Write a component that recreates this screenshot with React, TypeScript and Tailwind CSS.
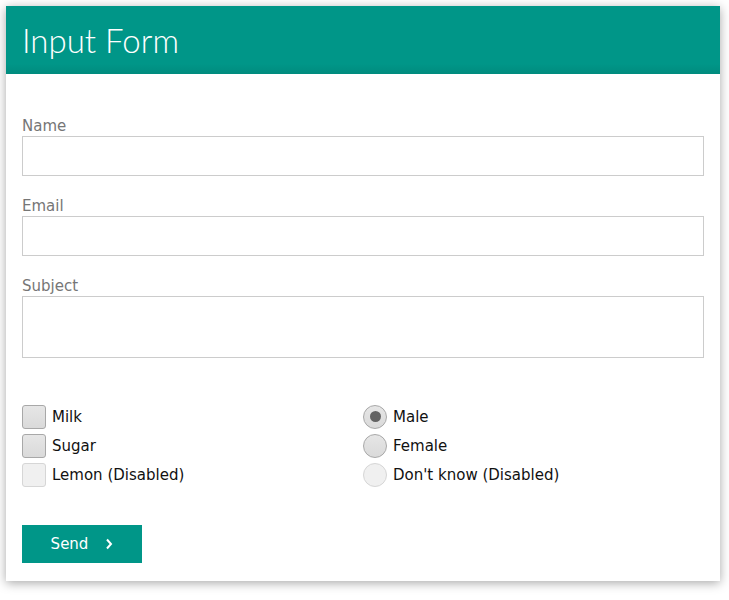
import React from "react";

function Checkbox({ label, disabled }: { label: string; disabled?: boolean }) {
  return (
    <div className="flex h-[29px] items-center">
      <span
        className={
          disabled
            ? "box-border h-[24px] w-[24px] rounded-[3px] border border-[#d6d6d6] bg-[#f0f0f0]"
            : "box-border h-[24px] w-[24px] rounded-[3px] border border-[#a8a8a8] bg-gradient-to-b from-[#e6e6e6] to-[#dadada]"
        }
      />
      <span className="ml-[6px] text-[15px] leading-[20px] text-[#111]">{label}</span>
    </div>
  );
}

function Radio({ label, disabled, checked }: { label: string; disabled?: boolean; checked?: boolean }) {
  return (
    <div className="flex h-[29px] items-center">
      <span
        className={
          disabled
            ? "box-border flex h-[24px] w-[24px] items-center justify-center rounded-full border border-[#d6d6d6] bg-[#f0f0f0]"
            : "box-border flex h-[24px] w-[24px] items-center justify-center rounded-full border border-[#a8a8a8] bg-gradient-to-b from-[#e6e6e6] to-[#dadada]"
        }
      >
        {checked && <span className="h-[11px] w-[11px] rounded-full bg-[#636363]" />}
      </span>
      <span className="ml-[6px] text-[15px] leading-[20px] text-[#111]">{label}</span>
    </div>
  );
}

function Field({ label, tall }: { label: string; tall?: boolean }) {
  return (
    <div className="flex flex-col">
      <label className="h-[20px] text-[15px] leading-[20px] text-[#767676]">{label}</label>
      <div
        className={
          tall
            ? "box-border h-[62px] w-full border border-[#cccccc] bg-white"
            : "box-border h-[40px] w-full border border-[#cccccc] bg-white"
        }
      />
    </div>
  );
}

export default function App() {
  return (
    <div className="min-h-[600px] bg-white pl-[6px] pt-[6px]" style={{ fontFamily: '"DejaVu Sans", Verdana, sans-serif' }}>
      <div className="w-[714px] bg-white shadow-[0_2px_10px_rgba(0,0,0,0.35)]">
        <div className="flex h-[68px] items-center bg-gradient-to-b from-[#009688] from-85% to-[#008b7e] pl-[16px]">
          <h1
            className="text-[33px] font-light leading-none text-white"
            style={{ fontFamily: 'Lato, "Open Sans", sans-serif' }}
          >
            Input Form
          </h1>
        </div>
        <div className="px-[16px] pb-[18px] pt-[42px]">
          <div className="flex flex-col gap-[20px]">
            <Field label="Name" />
            <Field label="Email" />
            <Field label="Subject" tall />
          </div>
          <div className="mt-[44px] grid grid-cols-2">
            <div className="flex flex-col">
              <Checkbox label="Milk" />
              <Checkbox label="Sugar" />
              <Checkbox label="Lemon (Disabled)" disabled />
            </div>
            <div className="flex flex-col">
              <Radio label="Male" checked />
              <Radio label="Female" />
              <Radio label="Don't know (Disabled)" disabled />
            </div>
          </div>
          <button className="mt-[36px] flex h-[38px] w-[120px] items-center justify-center bg-[#009688] text-[15px] text-white">
            <span>Send</span>
            <svg width="8" height="12" viewBox="0 0 8 12" className="ml-[17px]">
              <polyline points="2,1.5 6,6 2,10.5" fill="none" stroke="white" strokeWidth="2" />
            </svg>
          </button>
        </div>
      </div>
    </div>
  );
}
